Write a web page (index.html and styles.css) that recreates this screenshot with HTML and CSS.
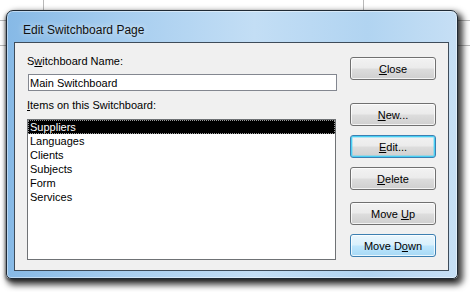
FILE: index.html
```html
<!DOCTYPE html>
<html lang="en">
<head>
    <meta charset="UTF-8">
    <title>Edit Switchboard Page</title>
    <link rel="stylesheet" href="styles.css">
</head>
<body>
    <div class="window">
        <div class="title-bar">Edit Switchboard Page</div>
        <div class="client">
            <div class="left-col">
                <label class="field-label">S<u>w</u>itchboard Name:</label>
                <input class="text-box" type="text" value="Main Switchboard">
                <label class="field-label items-label"><u>I</u>tems on this Switchboard:</label>
                <div class="list-box">
                    <div class="list-item selected">Suppliers</div>
                    <div class="list-item">Languages</div>
                    <div class="list-item">Clients</div>
                    <div class="list-item">Subjects</div>
                    <div class="list-item">Form</div>
                    <div class="list-item">Services</div>
                </div>
            </div>
            <div class="right-col">
                <button class="btn btn-close"><u>C</u>lose</button>
                <button class="btn btn-new"><u>N</u>ew...</button>
                <button class="btn focused"><u>E</u>dit...</button>
                <button class="btn"><u>D</u>elete</button>
                <button class="btn btn-up">Move <u>U</u>p</button>
                <button class="btn hover">Move D<u>o</u>wn</button>
            </div>
        </div>
    </div>
</body>
</html>
```

FILE: styles.css
```css
body {
    margin: 0;
    width: 470px;
    height: 292px;
    overflow: hidden;
    font-family: "Liberation Sans", Arial, sans-serif;
    font-size: 11px;
    color: #000;
    background-color: #fff;
    background-image:
        linear-gradient(#b9b9b9, #b9b9b9),
        linear-gradient(#b9b9b9, #b9b9b9),
        linear-gradient(#b9b9b9, #b9b9b9),
        linear-gradient(#b9b9b9, #b9b9b9);
    background-size: 1px 14px, 1px 14px, 100% 1px, 100% 1px;
    background-position: 43px 0, 363px 0, 0 20px, 0 45px;
    background-repeat: no-repeat;
}
.window {
    margin: 10px 0 0 6px;
    width: 452px;
    height: 269px;
    box-sizing: border-box;
    border: 1px solid #1f2a35;
    border-radius: 7px 7px 5px 5px;
    padding: 0 8px 7px 7px;
    display: flex;
    flex-direction: column;
    background: linear-gradient(to right, #86b9e6 0%, #a6cdef 25%, #c3def5 55%, #b1d4f1 80%, #c6dff5 100%);
    box-shadow: 3px 4px 6px 2px rgba(0,0,0,0.75), -1px 2px 3px rgba(0,0,0,0.4), inset 0 0 0 1px rgba(255,255,255,0.45);
}
.title-bar {
    height: 31px;
    box-sizing: border-box;
    padding: 6px 0 0 9px;
    display: flex;
    align-items: center;
    font-size: 12px;
    color: #111;
    text-shadow: 0 0 6px rgba(255,255,255,0.8);
}
.client {
    height: 229px;
    box-sizing: border-box;
    border: 1px solid #3e4c5a;
    background-color: #f0f0f0;
    padding: 12px 12px 0 12px;
    display: grid;
    grid-template-columns: 310px 86px;
    column-gap: 13px;
    align-items: start;
}
.left-col {
    display: flex;
    flex-direction: column;
}
.field-label {
    line-height: 13px;
    height: 13px;
}
.field-label u, .btn u {
    text-decoration-thickness: 1px;
    text-underline-offset: 1px;
}
.text-box {
    margin: 6px 0 0 1px;
    width: 309px;
    height: 17px;
    box-sizing: border-box;
    border: 1px solid #838790;
    padding: 0 0 0 1px;
    font-family: inherit;
    font-size: 11px;
    line-height: 15px;
    color: #000;
    background: #fff;
    outline: none;
}
.items-label {
    margin-top: 8px;
}
.list-box {
    margin-top: 7px;
    width: 309px;
    height: 141px;
    box-sizing: border-box;
    border: 1px solid #6f7275;
    background: #fff;
}
.list-item {
    height: 14px;
    line-height: 14px;
    padding-left: 2px;
}
.list-item.selected {
    background: #000;
    color: #fff;
    outline: 1px dotted #9a9a9a;
    outline-offset: -1px;
}
.right-col {
    display: flex;
    flex-direction: column;
    gap: 9px;
}
.btn {
    width: 86px;
    height: 23px;
    box-sizing: border-box;
    border: 1px solid #707070;
    border-radius: 3px;
    padding: 0;
    font-family: inherit;
    font-size: 11px;
    color: #000;
    background: linear-gradient(#f2f2f2 0%, #ebebeb 48%, #dddddd 52%, #cfcfcf 100%);
    box-shadow: inset 0 0 0 1px rgba(255,255,255,0.75);
}
.btn-close {
    margin-top: 2px;
}
.btn-new {
    margin-top: 14px;
}
.btn-up {
    margin-top: 3px;
}
.btn.focused {
    border-color: #3c7fb1;
    box-shadow: inset 0 0 0 1px #48d0f5, inset 0 0 0 2px rgba(72,208,245,0.35);
}
.btn.hover {
    border-color: #3c7fb1;
    background: linear-gradient(#eaf6fd 0%, #d9f0fc 48%, #bee6fd 52%, #a7d9f5 100%);
}
```
